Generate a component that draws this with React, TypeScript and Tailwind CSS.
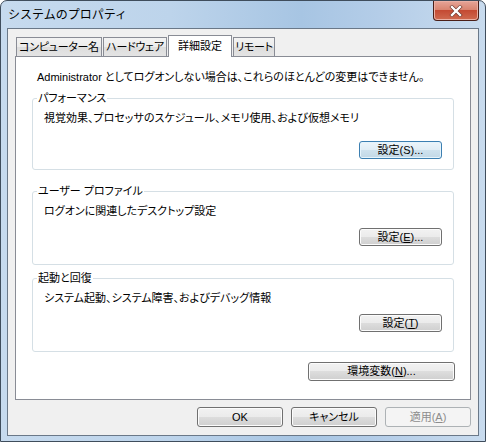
const font = "font-['Liberation_Sans','Noto_Sans_CJK_JP',sans-serif] [font-feature-settings:'palt']"

const btnBase =
  "flex items-center justify-center rounded-[3px] border text-[11px] leading-none"
const btnNormal =
  "border-[#707070] text-black shadow-[inset_0_0_0_1px_#fcfcfc] bg-[linear-gradient(#f2f2f2_0%,#ebebeb_49%,#dddddd_50%,#cfcfcf_100%)]"
const btnDefault =
  "border-[#3c7fb1] text-black bg-[linear-gradient(#edf5fa_0%,#e0edf5_49%,#cfe2ee_50%,#c2d8e6_100%)] shadow-[inset_0_0_0_1px_#e6f4fc]"
const btnDisabled =
  "border-[#adb2b5] bg-[#f4f4f4] text-[#8d8d8d]"

function Button({
  children,
  className = "",
  variant = "normal",
}: {
  children: React.ReactNode
  className?: string
  variant?: "normal" | "default" | "disabled"
}) {
  const look =
    variant === "default" ? btnDefault : variant === "disabled" ? btnDisabled : btnNormal
  return <div className={`${btnBase} ${look} ${className}`}>{children}</div>
}

function Group({
  label,
  text,
  button,
  gapTop,
  gapBottom,
  className = "",
}: {
  label: string
  text: string
  button: React.ReactNode
  gapTop: string
  gapBottom: string
  className?: string
}) {
  return (
    <fieldset className={`mx-[16px] rounded-[3px] border border-[#d5dfe5] px-[4px] ${className}`}>
      <legend className="px-[1px] text-[11px] leading-[14px]">{label}</legend>
      <div className={`px-[7px] pt-[6px] ${gapBottom}`}>
        <div className="text-[11px] leading-[14px]">{text}</div>
        <div className={`flex justify-end ${gapTop}`}>{button}</div>
      </div>
    </fieldset>
  )
}

const tabs = [
  { label: "コンピューター名", w: "w-[86px]" },
  { label: "ハードウェア", w: "w-[64px]" },
  { label: "詳細設定", w: "w-[64px]", active: true },
  { label: "リモート", w: "w-[42px]" },
]

export default function App() {
  return (
    <div className={`${font} h-[442px] w-[486px] text-black`}>
      <div className="flex h-[442px] w-[486px] flex-col rounded-t-[7px] border border-[#3f4d5c] bg-[linear-gradient(90deg,#c6daee_0%,#bdd4eb_35%,#a7c5e3_62%,#b4cde8_78%,#c8dbee_100%)] px-[6px] pb-[5px]">
        {/* title bar */}
        <div className="flex h-[27px] items-start justify-between">
          <div className="pt-[6px] pl-[1px] text-[12px] leading-[16px] [font-feature-settings:normal]">
            システムのプロパティ
          </div>
          <div className="flex h-[20px] w-[46px] items-center justify-center rounded-b-[4px] border border-t-0 border-[#4a1f18] bg-[linear-gradient(#e6a598_0%,#d98571_45%,#c44a33_50%,#cf6a50_100%)] shadow-[inset_0_0_0_1px_#eab0a4]">
            <svg width="14" height="12" viewBox="0 0 14 12">
              <path d="M3 2 L11 10 M11 2 L3 10" stroke="#6a3228" strokeWidth="3.6" strokeLinecap="square" />
              <path d="M3 2 L11 10 M11 2 L3 10" stroke="#ffffff" strokeWidth="2.4" strokeLinecap="square" />
            </svg>
          </div>
        </div>

        {/* client area */}
        <div className="flex flex-1 flex-col border border-[#6a7888] bg-[#f0f0f0]">
          <div className="flex items-end pt-[6px] pl-[8px]">
            {tabs.map((t) =>
              t.active ? (
                <div
                  key={t.label}
                  className={`${t.w} relative z-10 -mb-px mr-px flex h-[22px] items-center justify-center border border-b-0 border-[#898c95] bg-white pb-[1px] text-[11px] leading-none`}
                >
                  {t.label}
                </div>
              ) : (
                <div
                  key={t.label}
                  className={`${t.w} mr-px flex h-[19px] items-center justify-center border border-b-0 border-[#898c95] bg-[linear-gradient(#f3f3f3_0%,#ebebeb_50%,#dddddd_51%,#e4e4e4_100%)] text-[11px] leading-none tracking-[-0.3px]`}
                >
                  {t.label}
                </div>
              )
            )}
          </div>

          <div className="mx-[7px] flex h-[344px] flex-col border border-[#898c95] bg-white">
            <div className="pt-[13px] pl-[21px] text-[11px] leading-[14px]">
              Administrator としてログオンしない場合は、これらのほとんどの変更はできません。
            </div>

            <Group
              className="mt-[7px]"
              label="パフォーマンス"
              text="視覚効果、プロセッサのスケジュール、メモリ使用、および仮想メモリ"
              gapTop="mt-[16px]"
              gapBottom="pb-[10px]"
              button={
                <Button variant="default" className="h-[18px] w-[83px]">
                  設定(S)...
                </Button>
              }
            />

            <Group
              className="mt-[14px]"
              label="ユーザー プロファイル"
              text="ログオンに関連したデスクトップ設定"
              gapTop="mt-[10px]"
              gapBottom="pb-[18px]"
              button={
                <Button className="h-[18px] w-[83px]">
                  設定(<span className="underline">E</span>)...
                </Button>
              }
            />

            <Group
              className="mt-[6px]"
              label="起動と回復"
              text="システム起動、システム障害、およびデバッグ情報"
              gapTop="mt-[9px]"
              gapBottom="pb-[19px]"
              button={
                <Button className="h-[18px] w-[83px]">
                  設定(<span className="underline">T</span>)
                </Button>
              }
            />

            <div className="mt-[10px] flex justify-end pr-[15px]">
              <Button className="h-[19px] w-[147px]">
                環境変数(<span className="underline">N</span>)...
              </Button>
            </div>
          </div>

          <div className="flex justify-end gap-[8px] pt-[7px] pr-[7px]">
            <Button className="h-[20px] w-[86px]">OK</Button>
            <Button className="h-[20px] w-[86px]">キャンセル</Button>
            <Button variant="disabled" className="h-[20px] w-[86px]">
              適用(<span className="underline">A</span>)
            </Button>
          </div>
        </div>
      </div>
    </div>
  )
}
